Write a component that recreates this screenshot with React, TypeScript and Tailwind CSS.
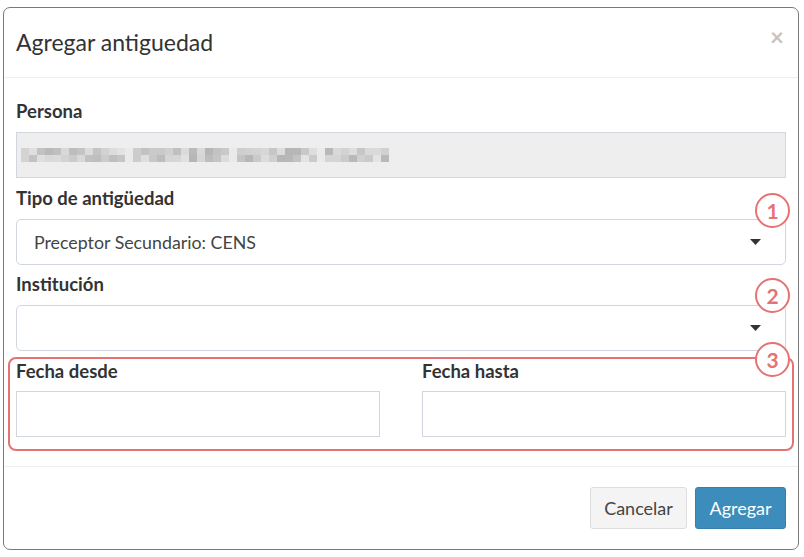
import React from 'react';

const font = { fontFamily: 'Lato, "Open Sans", sans-serif' };

// pixelated (censored) name in the disabled field
const shades = (() => {
  let seed = 11;
  const rnd = () => {
    seed = (seed * 9301 + 49297) % 233280;
    return seed / 233280;
  };
  const cols = 46;
  const rows: string[][] = [[], []];
  for (let r = 0; r < 2; r++) {
    for (let c = 0; c < cols; c++) {
      const gap = c === 13 || c === 26 || c === 37;
      const v = gap ? 234 : Math.round(180 + rnd() * 48);
      rows[r].push(`rgb(${v},${v},${v})`);
    }
  }
  return rows;
})();

function Label({ children, mb = 'mb-[9px]' }: { children: React.ReactNode; mb?: string }) {
  return <div className={`h-[24px] leading-[24px] text-[18.5px] font-bold text-[#333] ${mb}`}>{children}</div>;
}

function Caret() {
  return (
    <svg width="11" height="6" viewBox="0 0 11 6" className="absolute right-[24px] top-1/2 -translate-y-1/2">
      <path d="M0 0 L11 0 L5.5 6 Z" fill="#333" />
    </svg>
  );
}

function Marker({ n, top }: { n: number; top: string }) {
  return (
    <div className={`absolute left-[751px] ${top} w-[35px] h-[35px] rounded-full border-2 border-[#e57373] bg-white flex items-center justify-center text-[21px] font-bold text-[#e57373]`}>
      {n}
    </div>
  );
}

export default function App() {
  return (
    <div className="w-[804px] h-[557px] bg-white pl-[3px] pt-[7px]" style={font}>
      <div className="relative w-[796px] h-[543px] border border-[#7a7a7a] rounded-[7px] bg-white flex flex-col">
        {/* header */}
        <div className="h-[70px] border-b border-[#efefef] flex items-center justify-between pl-[12px] pr-[14px]">
          <h4 className="text-[23px] text-[#333] leading-none">Agregar antiguedad</h4>
          <span className="text-[24px] font-bold text-[#c4c4c4] leading-none -mt-[12px]">×</span>
        </div>

        {/* body */}
        <div className="flex-1 px-[12px] pt-[21px] flex flex-col">
          <div>
            <Label>Persona</Label>
            <div className="h-[46px] bg-[#eeeeee] border border-[#d2d6de] flex flex-col justify-center pl-[4px]">
              {shades.map((row, i) => (
                <div key={i} className="flex">
                  {row.map((c, j) => (
                    <span key={j} className="block w-[8px] h-[7px]" style={{ backgroundColor: c }} />
                  ))}
                </div>
              ))}
            </div>
          </div>

          <div className="mt-[8px]">
            <Label>Tipo de antigüedad</Label>
            <div className="relative h-[46px] border border-[#d2d6de] rounded-[5px] flex items-center pl-[17px] text-[17.8px] text-[#444]">
              Preceptor Secundario: CENS
              <Caret />
            </div>
          </div>

          <div className="mt-[7px]">
            <Label>Institución</Label>
            <div className="relative h-[46px] border border-[#d2d6de] rounded-[5px]">
              <Caret />
            </div>
          </div>

          <div className="mt-[8px] grid grid-cols-2 gap-[42px]">
            <div>
              <Label mb="mb-[8px]">Fecha desde</Label>
              <div className="h-[46px] border border-[#d2d6de]" />
            </div>
            <div>
              <Label mb="mb-[8px]">Fecha hasta</Label>
              <div className="h-[46px] border border-[#d2d6de]" />
            </div>
          </div>
        </div>

        {/* footer */}
        <div className="h-[83px] border-t border-[#efefef] flex items-center justify-end gap-[8px] pr-[12px]">
          <button className="h-[42px] w-[97px] rounded-[3px] border border-[#dddddd] bg-[#f4f4f4] text-[18px] text-[#444]">
            Cancelar
          </button>
          <button className="h-[42px] w-[91px] rounded-[3px] border border-[#367fa9] bg-[#3c8dbc] text-[18px] text-white">
            Agregar
          </button>
        </div>

        {/* annotations */}
        <div className="absolute left-[4px] top-[349px] w-[786px] h-[94px] border-2 border-[#e57373] rounded-[8px] pointer-events-none" />
        <Marker n={1} top="top-[185px]" />
        <Marker n={2} top="top-[270px]" />
        <Marker n={3} top="top-[334px]" />
      </div>
    </div>
  );
}
